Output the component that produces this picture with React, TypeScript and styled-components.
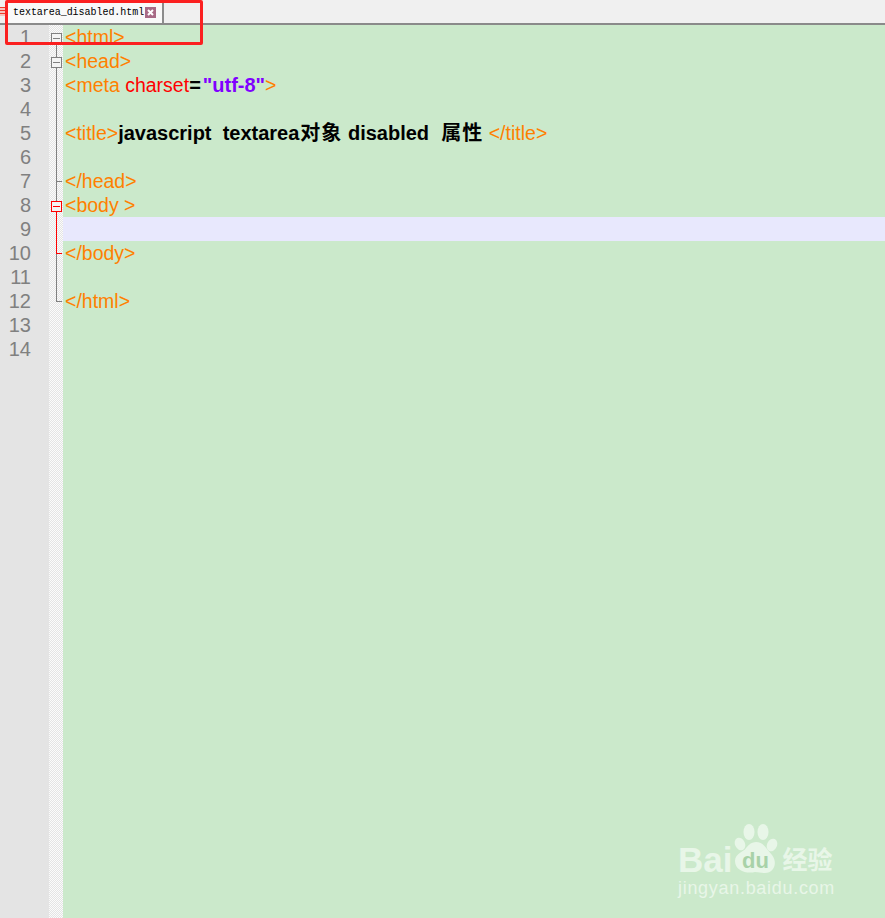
import React from "react"
import styled, { createGlobalStyle } from "styled-components"

const GRAY = "#808080"
const RED = "#ff0000"

const Global = createGlobalStyle`
    html, body {
        margin: 0;
        padding: 0;
        height: 100%;
        overflow: hidden;
    }
    #root {
        height: 100%;
    }
`
const Window = styled.div`
    position: relative;
    height: 918px;
    display: flex;
    flex-direction: column;
    overflow: hidden;
    font-family: 'Liberation Sans', Arial, 'Noto Sans CJK SC', sans-serif;
    font-size: 19.5px;
    background: #cbe9cb;
`
const TabBar = styled.div`
    height: 23px;
    flex: none;
    display: flex;
    background: #f0f0f0;
    border-bottom: 2px solid #8a8a8a;
`
const SaveIcon = styled.div`
    width: 6px;
    height: 9px;
    align-self: center;
    background: repeating-linear-gradient(to bottom, #ee3a2c 0 1px, #f6c4be 1px 3px);
`
const Tab = styled.div`
    width: 158px;
    box-sizing: border-box;
    padding: 0 0 2px 7px;
    margin-top: 3px;
    display: flex;
    align-items: center;
    gap: 1px;
    background: #f9f9f9;
    border-right: 2px solid #8c8c8c;
    font-family: 'Liberation Mono', monospace;
    font-size: 10px;
    letter-spacing: -0.04px;
    color: #000;
    white-space: nowrap;
`
const CloseBox = styled.svg`
    width: 11px;
    height: 11px;
    display: block;
    flex: none;
`
const Editor = styled.div`
    flex: 1;
    display: flex;
    flex-direction: column;
`
const Row = styled.div<{ $active?: boolean }>`
    height: 24px;
    flex: none;
    display: flex;
    background: ${p => (p.$active ? "#e8e8fd" : "transparent")};
`
const LineNo = styled.div`
    width: 31px;
    padding-right: 18px;
    flex: none;
    text-align: right;
    font-size: 20px;
    line-height: 24px;
    background: #e4e4e4;
    color: #808080;
`
const FoldCol = styled.div`
    width: 14px;
    flex: none;
    display: flex;
    background-color: #f4f4f4;
    background-image: repeating-conic-gradient(#e4e4e4 0 25%, #fbfbfb 0 50%);
    background-size: 2px 2px;
`
// tree lines of the fold margin are painted as background layers
const FoldTree = styled.div<{ $lines: string }>`
    flex: 1;
    box-sizing: border-box;
    padding: 3px 1px 0 2px;
    display: flex;
    align-items: center;
    background: ${p => p.$lines};
`
const FoldBox = styled.span<{ $color: string }>`
    width: 11px;
    height: 11px;
    box-sizing: border-box;
    display: flex;
    align-items: center;
    justify-content: center;
    border: 1px solid ${p => p.$color};
    background: #f4f4f4;
    &::after {
        content: '';
        width: 7px;
        height: 1px;
        background: ${p => p.$color};
    }
`
const Code = styled.div`
    flex: 1;
    padding-left: 2px;
    line-height: 24px;
    white-space: pre;
`
const Tag = styled.span`
    color: #ff8000;
`
const Attr = styled.span`
    color: #ff0000;
`
const Bold = styled.span`
    color: #000;
    font-weight: bold;
    font-size: 20px;
`
const Cjk = styled.span`
    margin-left: 1px;
    letter-spacing: 1px;
`
const Str = styled.span`
    color: #8000ff;
    font-weight: bold;
    font-size: 20px;
    margin-left: 2px;
`
const Filler = styled.div`
    flex: 1;
    display: flex;
`
const RedFrame = styled.div`
    position: absolute;
    left: 5px;
    top: 0;
    width: 192px;
    height: 39px;
    border: 3px solid #fb2020;
    border-radius: 2px;
`
const Watermark = styled.div`
    position: absolute;
    left: 678px;
    top: 823px;
    width: 160px;
    display: flex;
    flex-direction: column;
    color: #e8f6e8;
`
const LogoRow = styled.div`
    height: 50px;
    display: flex;
    align-items: flex-end;
    white-space: nowrap;
`
const Bai = styled.span`
    font-size: 35px;
    line-height: 40px;
    font-weight: bold;
    margin-right: 2px;
    margin-bottom: -7px;
`
const Jing = styled.span`
    font-size: 25px;
    line-height: 32px;
    font-weight: bold;
    margin-left: 4px;
    margin-bottom: -3px;
`
const Site = styled.span`
    margin-top: 4px;
    font-size: 18px;
    line-height: 22px;
    letter-spacing: 0.7px;
    white-space: nowrap;
`
const Paw = styled.svg`
    flex: none;
    display: block;
`
const DuText = styled.text`
    font-family: 'Liberation Sans', Arial, sans-serif;
    font-weight: bold;
    font-size: 22px;
    fill: #a8d2a8;
`

const seg = (color: string, top: number, height: number) =>
    `linear-gradient(${color}, ${color}) 7px ${top}px / 1px ${height}px no-repeat`
const tick = (color: string) =>
    `linear-gradient(${color}, ${color}) 7px 12px / 6px 1px no-repeat`

type Fold = { lines: string; box?: string }

const NONE: Fold = { lines: "none" }
const MID: Fold = { lines: seg(GRAY, 0, 24) }

const rows: { fold: Fold; code?: React.ReactNode; active?: boolean }[] = [
    { fold: { lines: seg(GRAY, 12, 12), box: GRAY }, code: <Tag>&lt;html&gt;</Tag> },
    { fold: { lines: seg(GRAY, 0, 24), box: GRAY }, code: <Tag>&lt;head&gt;</Tag> },
    {
        fold: MID,
        code: <><Tag>&lt;meta </Tag><Attr>charset</Attr><Bold>=</Bold><Str>"utf-8"</Str><Tag>&gt;</Tag></>,
    },
    { fold: MID },
    {
        fold: MID,
        code: <><Tag>&lt;title&gt;</Tag><Bold>javascript  textarea<Cjk>对象</Cjk> disabled  <Cjk>属性</Cjk> </Bold><Tag>&lt;/title&gt;</Tag></>,
    },
    { fold: MID },
    { fold: { lines: `${tick(GRAY)}, ${seg(GRAY, 0, 24)}` }, code: <Tag>&lt;/head&gt;</Tag> },
    { fold: { lines: `${seg(GRAY, 0, 8)}, ${seg(RED, 12, 12)}`, box: RED }, code: <Tag>&lt;body &gt;</Tag> },
    { fold: { lines: seg(RED, 0, 24) }, active: true },
    { fold: { lines: `${tick(RED)}, ${seg(RED, 0, 13)}, ${seg(GRAY, 13, 11)}` }, code: <Tag>&lt;/body&gt;</Tag> },
    { fold: MID },
    { fold: { lines: `${tick(GRAY)}, ${seg(GRAY, 0, 13)}` }, code: <Tag>&lt;/html&gt;</Tag> },
    { fold: NONE },
    { fold: NONE },
]

const App = () => {
    return (
        <Window>
            <Global />
            <TabBar>
                <SaveIcon />
                <Tab>
                    textarea_disabled.html
                    <CloseBox viewBox="0 0 11 11">
                        <rect width="11" height="11" fill="#a86a86" />
                        <path d="M3 3 L8 8 M8 3 L3 8" stroke="#fff" strokeWidth="2" />
                    </CloseBox>
                </Tab>
            </TabBar>
            <Editor>
                {rows.map((r, i) => (
                    <Row key={i} $active={r.active}>
                        <LineNo>{i + 1}</LineNo>
                        <FoldCol>
                            <FoldTree $lines={r.fold.lines}>
                                {r.fold.box && <FoldBox $color={r.fold.box} />}
                            </FoldTree>
                        </FoldCol>
                        <Code>{r.code}</Code>
                    </Row>
                ))}
                <Filler>
                    <LineNo />
                    <FoldCol />
                </Filler>
            </Editor>
            <RedFrame />
            <Watermark>
                <LogoRow>
                    <Bai>Bai</Bai>
                    <Paw width="44" height="50" viewBox="0 0 44 50">
                        <ellipse cx="6" cy="21" rx="5" ry="6.5" fill="#e8f6e8" transform="rotate(-25 6 21)" />
                        <ellipse cx="15" cy="9" rx="5.5" ry="8" fill="#e8f6e8" />
                        <ellipse cx="29" cy="9" rx="5.5" ry="8" fill="#e8f6e8" />
                        <ellipse cx="38" cy="22" rx="5" ry="6.5" fill="#e8f6e8" transform="rotate(25 38 22)" />
                        <path d="M22 19 C30 19 32 26 38 32 C44 40 40 50 31 50 C27 50 25 49 21 49 C13 51 1 48 1 38 C1 30 10 29 12 25 C15 21 18 19 22 19 Z" fill="#e8f6e8" />
                        <DuText x="8" y="45">du</DuText>
                    </Paw>
                    <Jing>经验</Jing>
                </LogoRow>
                <Site>jingyan.baidu.com</Site>
            </Watermark>
        </Window>
    )
}

export default App
